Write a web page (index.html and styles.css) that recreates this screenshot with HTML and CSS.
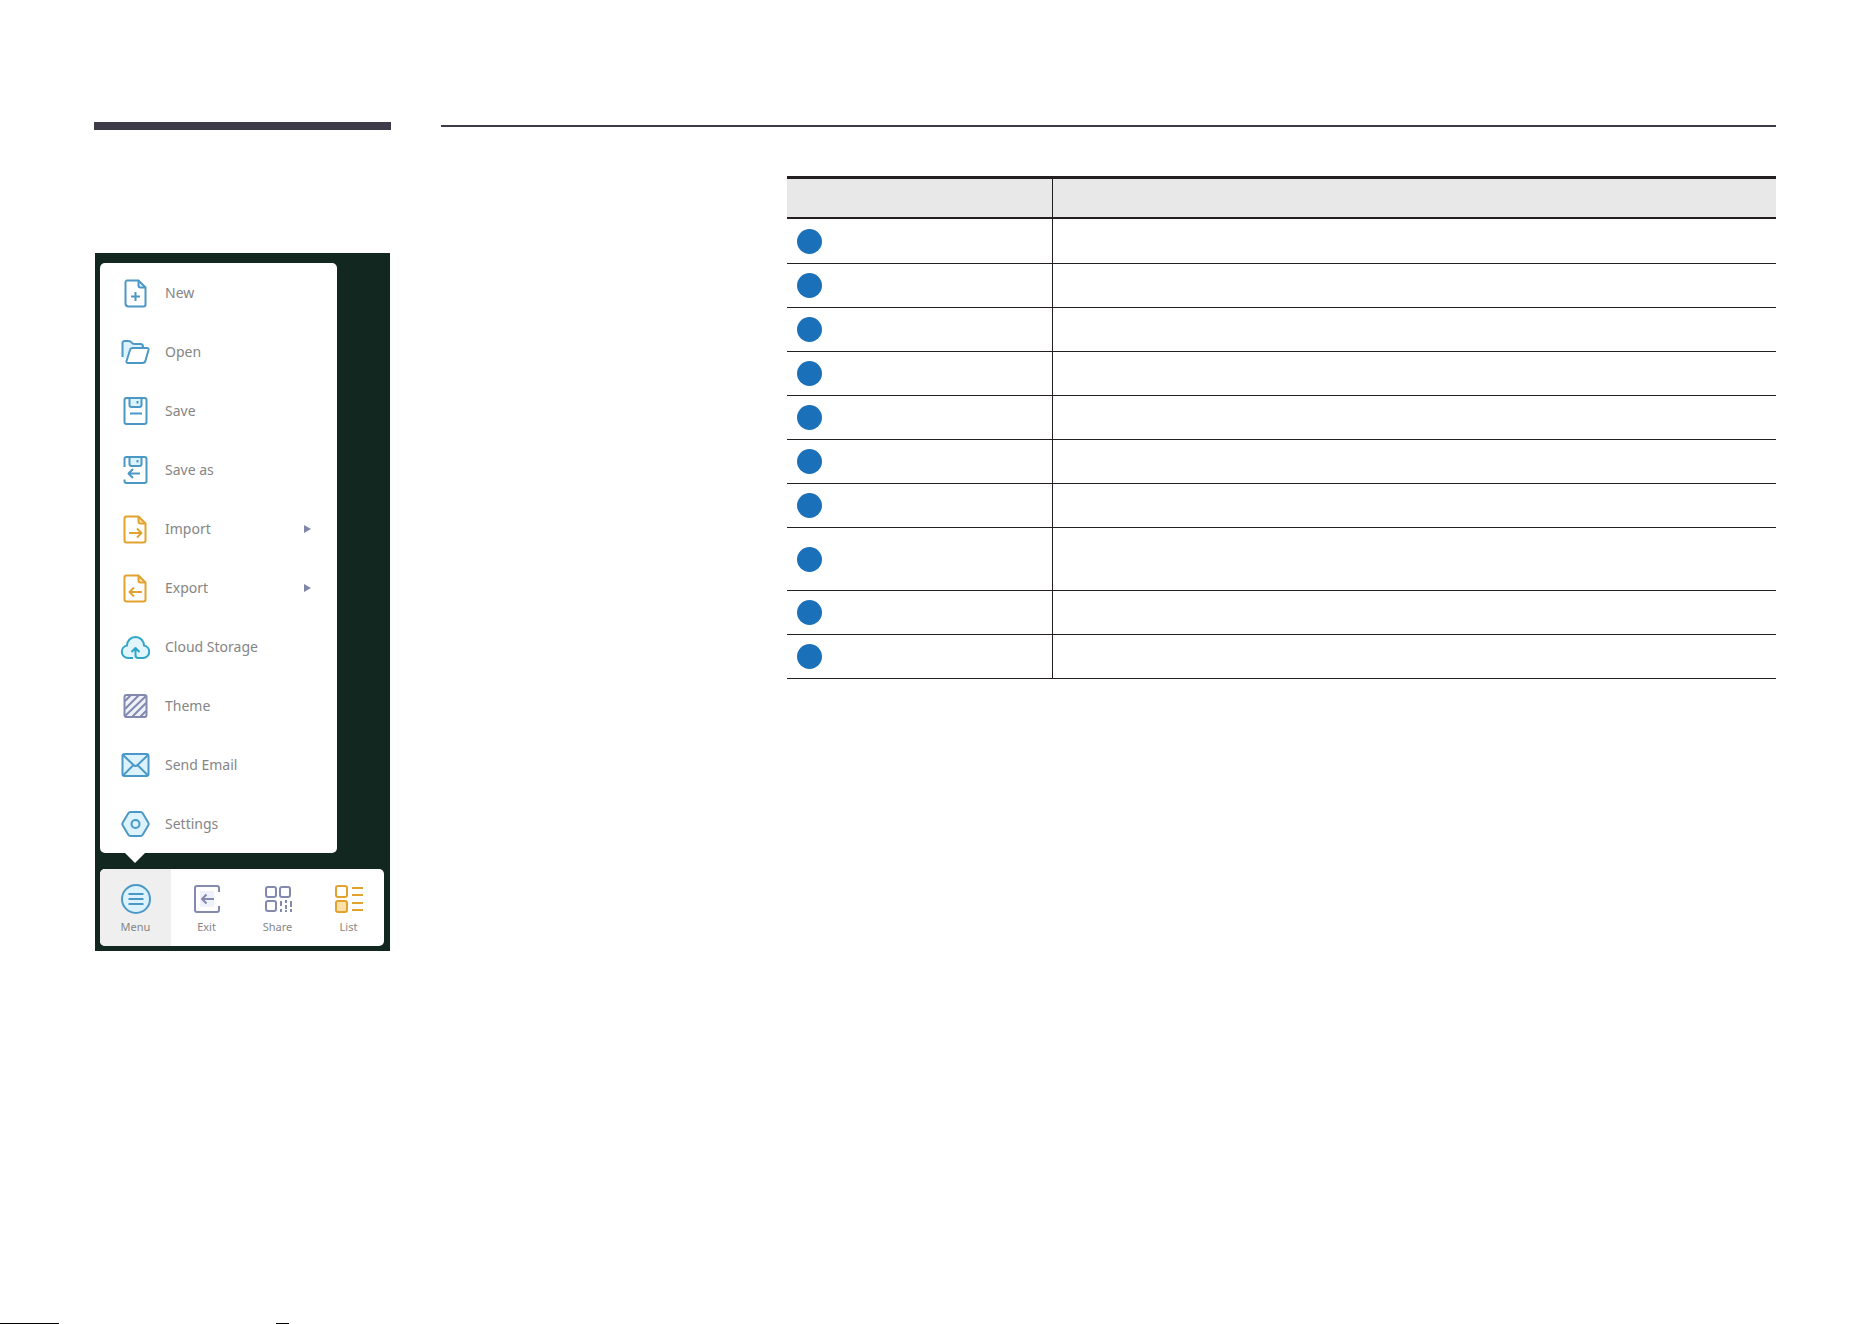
FILE: index.html
```html
<!DOCTYPE html>
<html lang="en">
<head>
    <meta charset="UTF-8">
    <title>Menu</title>
    <link rel="stylesheet" href="styles.css">
</head>

<body>

    <main class="page">
        <div class="sec-left">
            <div class="title-bar"></div>

            <div class="board">
                <nav class="popup">
                    <button type="button" class="item blue">
                        <svg class="icon" viewBox="0 0 30 30"><path class="tint" d="M19 2.500v6h6z"/><path d="M6.500 2.500h12l7 7v17a2 2 0 0 1-2 2h-15a3 3 0 0 1-3-3v-21a2 2 0 0 1 1-2z"/><path d="M18.500 2.500v5a2 2 0 0 0 2 2h5M15.500 14v9M11 18.500h9"/></svg>
                        <span>New</span>
                    </button>
                    <button type="button" class="item blue">
                        <svg class="icon" viewBox="0 0 30 30"><path class="tint" d="M2.500 21V6a2 2 0 0 1 2-2h5l3 3h8a2 2 0 0 1 2 2v2H13q-3 0-4 3L5 22z"/><path d="M2.500 20V6a2 2 0 0 1 2-2h4q2 0 3 1.500t3 1.500h6q2.500 0 2.500 3"/><path class="paper" d="M12.500 11H27q2 0 1.500 2l-3 10.500Q25 26 22.500 26H8q-2 0-1.500-2L10 13q.5-2 2.500-2z"/></svg>
                        <span>Open</span>
                    </button>
                    <button type="button" class="item blue">
                        <svg class="icon" viewBox="0 0 30 30"><path class="tint" d="M9 2h13v9H9z"/><rect x="4.500" y="2" width="22" height="26" rx="2"/><path d="M9.500 2v7a2 2 0 0 0 2 2h8a2 2 0 0 0 2-2V2M17.500 5v2.500M10 17.500h12"/></svg>
                        <span>Save</span>
                    </button>
                    <button type="button" class="item blue">
                        <svg class="icon" viewBox="0 0 30 30"><path class="tint" d="M9 2h13v9H9z"/><path d="M4.500 12V4a2 2 0 0 1 2-2h18a2 2 0 0 1 2 2v22a2 2 0 0 1-2 2h-18a2 2 0 0 1-2-2v-1.500"/><path d="M9.500 2v7a2 2 0 0 0 2 2h8a2 2 0 0 0 2-2V2M17.500 5v2.500M20 18.500H9M13 14l-4.500 4.500L13 23"/></svg>
                        <span>Save as</span>
                    </button>
                    <button type="button" class="item orange">
                        <svg class="icon" viewBox="0 0 30 30"><path class="tint" d="M19 2.500v6h6z"/><path d="M6.500 2.500h12l7 7v17a2 2 0 0 1-2 2h-17a2 2 0 0 1-2-2v-22a2 2 0 0 1 2-2z"/><path d="M18.500 2.500v5a2 2 0 0 0 2 2h5M9 19h12M17 14.500l4.500 4.500-4.500 4.500"/></svg>
                        <span>Import</span>
                        <svg class="more" viewBox="0 0 8 8"><path d="M1 0l7 4-7 4z"/></svg>
                    </button>
                    <button type="button" class="item orange">
                        <svg class="icon" viewBox="0 0 30 30"><path class="tint" d="M19 2.500v6h6z"/><path d="M6.500 2.500h12l7 7v17a2 2 0 0 1-2 2h-17a2 2 0 0 1-2-2v-22a2 2 0 0 1 2-2z"/><path d="M18.500 2.500v5a2 2 0 0 0 2 2h5M22 19H10M14 14.500L9.500 19l4.500 4.500"/></svg>
                        <span>Export</span>
                        <svg class="more" viewBox="0 0 8 8"><path d="M1 0l7 4-7 4z"/></svg>
                    </button>
                    <button type="button" class="item cyan">
                        <svg class="icon" viewBox="0 0 30 30"><path class="tint" d="M7 13q0-9 8.500-9T24 13q5 2 5 6.500T24 26H7q-5-1-5-6.500T7 13z"/><path d="M13 26H8a6.300 6.300 0 0 1-1-12.500 8.500 8.500 0 1 1 17 0A6.300 6.300 0 0 1 23 26h-5q-2.500 0-2.500-3v-6M11.500 20l4-4 4 4"/></svg>
                        <span>Cloud Storage</span>
                    </button>
                    <button type="button" class="item purple">
                        <svg class="icon" viewBox="0 0 30 30"><rect class="tint" x="4.500" y="4" width="22" height="22" rx="2"/><rect x="4.500" y="4" width="22" height="22" rx="2"/><path d="M5 10l6-6M5 18L19 4M5 25L26 5M12 26l14-14M20 26l6-6"/></svg>
                        <span>Theme</span>
                    </button>
                    <button type="button" class="item blue">
                        <svg class="icon" viewBox="0 0 30 30"><rect class="tint" x="2.500" y="4" width="26" height="22" rx="2"/><rect x="2.500" y="4" width="26" height="22" rx="2"/><path d="M3 5l10.500 10q2 2 4 0L28 5M3 25.500l10-10M28 25.500l-10-10"/></svg>
                        <span>Send Email</span>
                    </button>
                    <button type="button" class="item blue">
                        <svg class="icon" viewBox="0 0 30 30"><path class="tint" d="M9 3h13l7 12-7 12H9L2 15z"/><path d="M10.500 3h10q1.500 0 2.200 1.200l5.500 9.300q1 1.500 0 3l-5.500 9.300Q22 27 20.500 27h-10q-1.500 0-2.200-1.200l-5.500-9.300q-1-1.500 0-3l5.500-9.300Q9 3 10.500 3z"/><circle cx="15.500" cy="15" r="4"/></svg>
                        <span>Settings</span>
                    </button>
                </nav>

                <nav class="toolbar">
                    <button type="button" class="tool blue active">
                        <svg class="icon" viewBox="0 0 30 30"><circle class="tint" cx="15" cy="15" r="14"/><circle cx="15" cy="15" r="14"/><path d="M7.500 10h15M7.500 15h15M7.500 20h15"/></svg>
                        <span>Menu</span>
                    </button>
                    <button type="button" class="tool purple">
                        <svg class="icon" viewBox="0 0 30 30"><path class="tint" d="M8 7h14v16H8z"/><path d="M27 8V4a2 2 0 0 0-2-2H5a2 2 0 0 0-2 2v22a2 2 0 0 0 2 2h20a2 2 0 0 0 2-2v-4M22 15H10M14.500 10.500L10 15l4.500 4.500"/></svg>
                        <span>Exit</span>
                    </button>
                    <button type="button" class="tool purple">
                        <svg class="icon" viewBox="0 0 30 30"><rect x="3" y="3" width="10" height="10" rx="2"/><rect x="17" y="3" width="10" height="10" rx="2"/><rect x="3" y="17" width="10" height="10" rx="2"/><path d="M18 17v5M18 25v3M23 16v3M23 21v4M23 26v2M28 17v6M28 25v3"/></svg>
                        <span>Share</span>
                    </button>
                    <button type="button" class="tool orange">
                        <svg class="icon" viewBox="0 0 30 30"><rect class="tint" x="2" y="17" width="11" height="11" rx="2"/><rect x="2" y="2" width="11" height="11" rx="2"/><rect x="2" y="17" width="11" height="11" rx="2"/><path d="M18 4h11M18 11h11M18 19h11M18 26h11"/></svg>
                        <span>List</span>
                    </button>
                </nav>
            </div>
        </div>

        <div class="sec-right">
            <table class="menu-table">
                <thead>
                    <tr><th></th><th></th></tr>
                </thead>
                <tbody>
                    <tr><td><span class="dot"></span></td><td></td></tr>
                    <tr><td><span class="dot"></span></td><td></td></tr>
                    <tr><td><span class="dot"></span></td><td></td></tr>
                    <tr><td><span class="dot"></span></td><td></td></tr>
                    <tr><td><span class="dot"></span></td><td></td></tr>
                    <tr><td><span class="dot"></span></td><td></td></tr>
                    <tr><td><span class="dot"></span></td><td></td></tr>
                    <tr class="tall"><td><span class="dot"></span></td><td></td></tr>
                    <tr><td><span class="dot"></span></td><td></td></tr>
                    <tr><td><span class="dot"></span></td><td></td></tr>
                </tbody>
            </table>
        </div>
    </main>

    <footer class="footer">
        <span class="mark mark-long"></span>
        <span class="mark"></span>
    </footer>

</body>

</html>
```
FILE: styles.css
```css
* {
    box-sizing: border-box;
}
body {
    display: flex;
    flex-direction: column;
    min-height: 100vh;
    margin: 0;
    background: #ffffff;
    font-family: "Noto Sans", Arial, sans-serif;
    font-size: 14px;
}
.page {
    display: grid;
    grid-template-columns: 297px 1fr;
    gap: 50px;
    padding: 122px 96px 0 94px;
}
.title-bar {
    height: 8px;
    background: #3e3a4a;
}

/* dark board with the menu */
.board {
    margin: 123px 1px 0;
    padding: 10px 6px 5px 5px;
    background: #12271f;
}
.popup {
    position: relative;
    width: 237px;
    margin-bottom: 16px;
    border-radius: 5px;
    background: #ffffff;
}
.popup::after {
    content: "";
    position: absolute;
    top: 100%;
    left: 25px;
    border: 10px solid transparent;
    border-top-color: #ffffff;
    border-bottom: 0;
}
button {
    border: 0;
    background: none;
    color: #858585;
    font-family: inherit;
}
.item {
    display: flex;
    align-items: center;
    gap: 15px;
    width: 100%;
    height: 59px;
    padding: 0 26px 0 20px;
    font-size: 14px;
}
.toolbar {
    display: flex;
    overflow: hidden;
    border-radius: 5px;
    background: #ffffff;
}
.tool {
    display: flex;
    flex: 1;
    flex-direction: column;
    align-items: center;
    gap: 5px;
    height: 77px;
    padding: 15px 0 0;
    font-size: 11px;
    line-height: 15px;
}
.active {
    background: #efefef;
}

.icon {
    width: 30px;
    height: 30px;
    fill: none;
    stroke: currentColor;
    stroke-width: 2;
    stroke-linejoin: round;
}
.icon .tint {
    stroke: none;
}
.icon .paper {
    fill: #ffffff;
}
.blue .icon {
    color: #4b98c6;
}
.blue .tint {
    fill: #dcf3fd;
}
.cyan .icon {
    color: #2fa5c8;
}
.cyan .tint {
    fill: #e2f5fc;
}
.orange .icon {
    color: #e2a22e;
}
.orange .tint {
    fill: #fde0a8;
}
.purple .icon {
    color: #8489ae;
}
.purple .tint {
    fill: #f0f2fb;
}
.more {
    width: 8px;
    height: 8px;
    margin-left: auto;
    fill: #7f86a6;
}

.sec-right {
    margin-top: 3px;
    padding: 49px 0 0 346px;
    border-top: 2px solid #3e3a4a;
}
.menu-table {
    width: 100%;
    border-spacing: 0;
    border-top: 3px solid #231f20;
}
th, td {
    padding: 0;
    border-bottom: 1px solid #231f20;
}
th {
    height: 40px;
    border-bottom-width: 2px;
    background: #e8e8e8;
}
td {
    height: 44px;
    padding-left: 10px;
}
tbody tr:first-child td {
    height: 45px;
}
th:first-child, td:first-child {
    width: 266px;
    border-right: 1px solid #231f20;
}
.menu-table .tall td {
    height: 63px;
}
.dot {
    display: block;
    width: 25px;
    height: 25px;
    border-radius: 50%;
    background: #1a70b9;
}

.footer {
    display: flex;
    gap: 217px;
    margin-top: auto;
}
.mark {
    width: 13px;
    height: 1px;
    background: #000000;
}
.mark-long {
    width: 59px;
}
```
